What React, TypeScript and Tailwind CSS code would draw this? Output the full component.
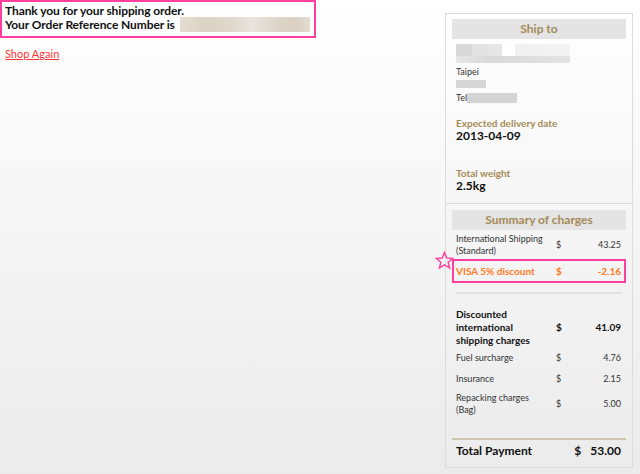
import React from 'react';

const Row = ({ label, value, bold = false }: { label: React.ReactNode; value: string; bold?: boolean }) => (
    <div className={`flex items-center pl-[4px] pr-[5px] ${bold ? 'font-bold text-[10px] leading-[13px] text-[#111]' : 'text-[9px] leading-[12px] text-[#333]'}`}>
        <div className="w-[100px]">{label}</div>
        <div className="w-[20px]">$</div>
        <div className="flex-1 text-right">{value}</div>
    </div>
);

export default function App() {
    return (
        <div className="relative min-h-[474px] h-[474px] bg-gradient-to-b from-white to-[#ebebeb] font-['Lato','Liberation_Sans',sans-serif] overflow-hidden">
            <div className="flex">
                {/* left column */}
                <div className="flex-1">
                    <div className="w-[316px] h-[38px] border-2 border-[#ff3fa0] pl-[3px] pt-[2px] text-[12px] font-bold leading-[13px] text-[#111] tracking-[-0.1px]">
                        <div>Thank you for your shipping order.</div>
                        <div className="flex items-center">
                            <span>Your Order Reference Number is</span>
                            <span className="ml-[5px] h-[15px] w-[130px] bg-[linear-gradient(90deg,#e4ddd1_0%,#dcd3c5_20%,#e0d8cc_40%,#e8e4dc_55%,#ddd5c9_75%,#d9d0c1_88%,#e3dcd1_100%)]" />
                        </div>
                    </div>
                    <a href="#" className="inline-block mt-[9px] ml-[5px] text-[11px] text-[#ff3333] underline leading-[13px]">Shop Again</a>
                </div>

                {/* right card */}
                <div className="relative w-[188px] mt-[13px] mr-[7px] h-[455px] border border-[#dcdcdc]">
                    {/* ship to */}
                    <div className="h-[190px] border-b border-[#dcdcdc] px-[6px] pt-[5px]">
                        <div className="h-[20px] bg-[#e4e4e4] text-center text-[12px] leading-[20px] font-bold text-[#a38a56]">Ship to</div>
                        <div className="px-[4px]">
                            <div className="mt-[5px] h-[12px] w-[114px] bg-[linear-gradient(90deg,#d9d9d9_0%,#d9d9d9_14%,#e2e2e2_14%,#e2e2e2_28%,#e6e6e6_28%,#e6e6e6_40%,#ffffff_40%,#ffffff_52%,#f0f0f0_52%,#f3f3f3_100%)]" />
                            <div className="h-[7px] w-[114px] bg-[linear-gradient(90deg,#e6e6e6_0%,#d9d9d9_30%,#dddddd_60%,#e3e3e3_100%)]" />
                            <div className="mt-[3px] text-[9px] leading-[12px] text-[#333]">Taipei</div>
                            <div className="mt-[2px] h-[8px] w-[30px] bg-[#d6d6d6]" />
                            <div className="mt-[4px] flex items-center text-[9px] leading-[12px] text-[#333]">
                                <span>Tel</span>
                                <span className="h-[10px] w-[50px] bg-[#d4d4d4]" />
                            </div>
                            <div className="mt-[13px] text-[10px] leading-[12px] font-bold text-[#a38a56]">Expected delivery date</div>
                            <div className="text-[12px] leading-[13px] font-bold text-[#111]">2013-04-09</div>
                            <div className="mt-[25px] text-[10px] leading-[12px] font-bold text-[#a38a56]">Total weight</div>
                            <div className="text-[12px] leading-[13px] font-bold text-[#111]">2.5kg</div>
                        </div>
                    </div>

                    {/* summary */}
                    <div className="px-[6px] pt-[6px]">
                        <div className="h-[20px] bg-[#e4e4e4] text-center text-[12px] leading-[20px] font-bold text-[#a38a56]">Summary of charges</div>
                        <div className="mt-[3px]">
                            <Row label={<>International Shipping<br />(Standard)</>} value="43.25" />
                        </div>
                        <div className="relative mt-[2px] h-[24px] border-2 border-solid border-[#ff3fa0] flex items-center pl-[2px] pr-[3px] text-[10px] font-bold text-[#ff7a1f]">
                            <svg className="absolute left-[-19px] top-[-10px]" width="19" height="19" viewBox="0 0 24 24" fill="none" stroke="#ff3fa0" strokeWidth="1.8" strokeLinejoin="miter">
                                <polygon points="12,2 14.9,8.9 22.5,9.3 16.6,14.2 18.5,21.5 12,17.4 5.5,21.5 7.4,14.2 1.5,9.3 9.1,8.9" />
                            </svg>
                            <div className="w-[100px]">VISA 5% discount</div>
                            <div className="w-[20px]">$</div>
                            <div className="flex-1 text-right">-2.16</div>
                        </div>
                        <div className="mt-[9px] mx-[4px] h-[2px] bg-[#e2e2e2]" />
                        <div className="mt-[14px]">
                            <Row bold label={<>Discounted<br />international<br />shipping charges</>} value="41.09" />
                        </div>
                        <div className="mt-[5px]"><Row label="Fuel surcharge" value="4.76" /></div>
                        <div className="mt-[9px]"><Row label="Insurance" value="2.15" /></div>
                        <div className="mt-[7px]"><Row label={<>Repacking charges<br />(Bag)</>} value="5.00" /></div>
                        <div className="mt-[22px] h-[2px] bg-[#cfc4ad]" />
                        <div className="mt-[3px] flex items-center pl-[4px] pr-[5px] text-[12px] leading-[16px] font-bold text-[#111]">
                            <div className="flex-1">Total Payment</div>
                            <div className="w-[16px]">$</div>
                            <div>53.00</div>
                        </div>
                    </div>
                </div>
            </div>
        </div>
    );
}
